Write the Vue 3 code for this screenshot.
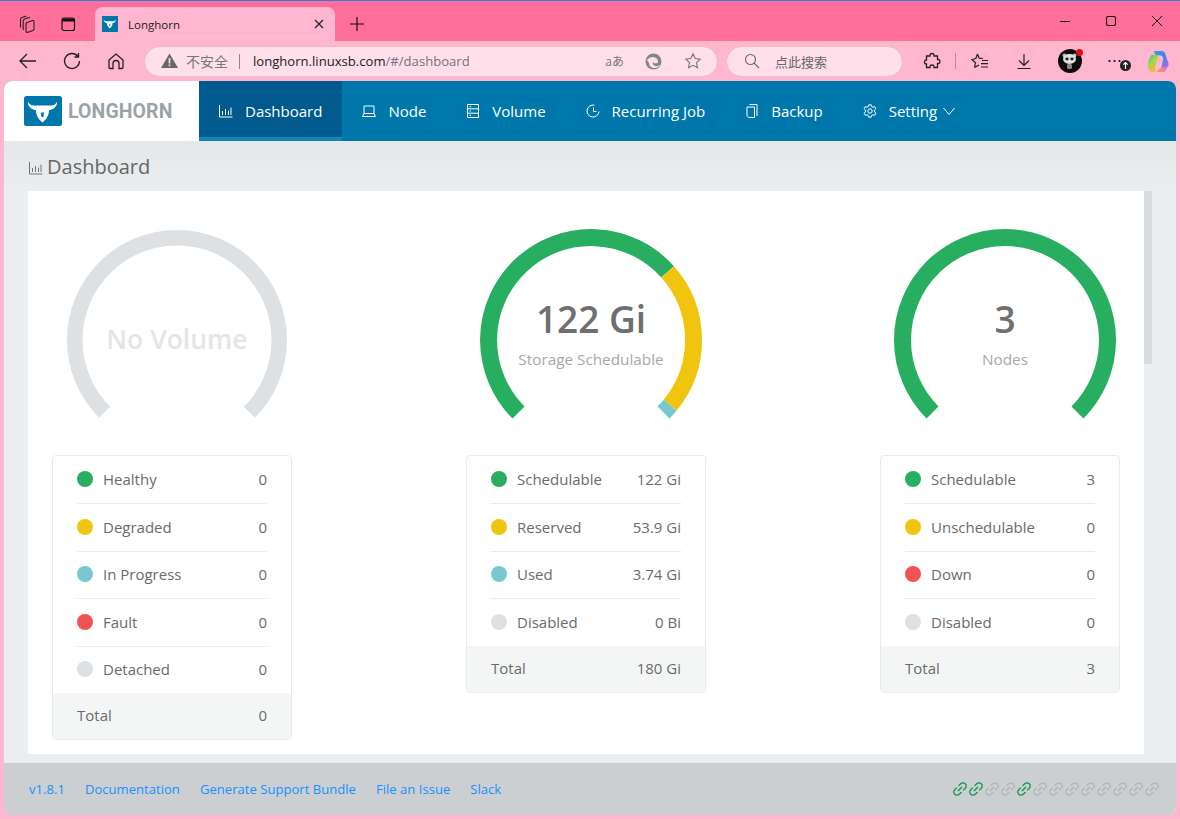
<script setup>
const cx = 115, cy = 115
function pt(a, r) {
  const t = (a - 90) * Math.PI / 180
  return `${(cx + r * Math.cos(t)).toFixed(2)} ${(cy + r * Math.sin(t)).toFixed(2)}`
}
function arc(a0, a1, r) {
  return `M${pt(a0, r)} A${r} ${r} 0 ${a1 - a0 > 180 ? 1 : 0} 1 ${pt(a1, r)}`
}
function segs(list, r) {
  const total = list.reduce((s, x) => s + x.v, 0)
  let a = -135
  return list.map(x => {
    const b = a + x.v / total * 270
    const s = { d: arc(a, b, r), c: x.c }
    a = b
    return s
  })
}
const G = '#27ae60', Y = '#f1c40f', B = '#78c9cf', R = '#f15354', D = '#dee1e3'
const cards = [
  {
    main: 'No Volume', sub: '', empty: true, w: 15.5,
    arcs: segs([{ v: 1, c: D }], 102.25),
    rows: [['Healthy', '0', G], ['Degraded', '0', Y], ['In Progress', '0', B], ['Fault', '0', R], ['Detached', '0', D]],
    total: '0'
  },
  {
    main: '122 Gi', sub: 'Storage Schedulable', w: 17,
    arcs: segs([{ v: 122, c: G }, { v: 53.9, c: Y }, { v: 3.74, c: B }], 102.5),
    rows: [['Schedulable', '122 Gi', G], ['Reserved', '53.9 Gi', Y], ['Used', '3.74 Gi', B], ['Disabled', '0 Bi', D]],
    total: '180 Gi'
  },
  {
    main: '3', sub: 'Nodes', w: 17,
    arcs: segs([{ v: 1, c: G }], 102.5),
    rows: [['Schedulable', '3', G], ['Unschedulable', '0', Y], ['Down', '0', R], ['Disabled', '0', D]],
    total: '3'
  }
]
const nav = [
  { t: 'Dashboard', i: 'chart', on: true },
  { t: 'Node', i: 'laptop' },
  { t: 'Volume', i: 'db' },
  { t: 'Recurring Job', i: 'clock' },
  { t: 'Backup', i: 'copy' },
  { t: 'Setting', i: 'gear', caret: true }
]
const links = ['Documentation', 'Generate Support Bundle', 'File an Issue', 'Slack']
const chain = [1, 1, 0, 0, 1, 0, 0, 0, 0, 0, 0, 0, 0]
const linkPath = 'M574 665.4a8.03 8.03 0 0 0-11.3 0L446.5 781.6c-53.8 53.8-144.6 59.5-204 0-59.5-59.5-53.8-150.2 0-204l116.2-116.2c3.1-3.1 3.1-8.2 0-11.3l-39.8-39.8a8.03 8.03 0 0 0-11.3 0L191.4 526.5c-84.6 84.6-84.6 221.5 0 306s221.5 84.6 306 0l116.2-116.2c3.1-3.1 3.1-8.2 0-11.3L574 665.4zm258.6-474c-84.6-84.6-221.5-84.6-306 0L410.3 307.6a8.03 8.03 0 0 0 0 11.3l39.7 39.7c3.1 3.1 8.2 3.1 11.3 0l116.2-116.2c53.8-53.8 144.6-59.5 204 0 59.5 59.5 53.8 150.2 0 204L665.3 562.6a8.03 8.03 0 0 0 0 11.3l39.8 39.8c3.1 3.1 8.2 3.1 11.3 0l116.2-116.2c84.5-84.6 84.5-221.5 0-306.1zM610.1 372.3a8.03 8.03 0 0 0-11.3 0L372.3 598.7a8.03 8.03 0 0 0 0 11.3l39.6 39.6c3.1 3.1 8.2 3.1 11.3 0l226.4-226.4c3.1-3.1 3.1-8.2 0-11.3l-39.5-39.6z'
const bull = 'M4 5.500C5 8 7 9.500 10 9.500H27C30 9.500 32 8 33 5.500C33.500 10 30.500 13 25 14.300C25 18 24 22 18.500 26.500C13 22 12 18 12 14.300C6.500 13 3.500 10 4 5.500ZM17 16.500H20L19.700 20Q18.500 22.500 17.300 20Z'
</script>

<template>
  <div class="screen">
    <div class="tabbar">
      <button class="chrome-btn first">
        <svg width="20" height="20" viewBox="0 0 20 20" fill="none" stroke="#222" stroke-width="1.100"><path d="M11 8.500L16.500 6.500Q18 6.200 18 8V15Q18 16 17 16.500L12 18.300Q10 18.700 10 17V10Q10 9 11 8.500Z"/><path d="M7.200 16V7Q7.200 5.500 8.700 5L14 3.200M4.500 13.500V5.500Q4.500 4 6 3.500L10.500 2"/></svg>
      </button>
      <button class="chrome-btn second">
        <svg width="20" height="20" viewBox="0 0 20 20" fill="none" stroke="#111" stroke-width="1.200"><rect x="4" y="4" width="12.500" height="12.500" rx="2"/><path d="M4 6H16.500" stroke-width="3"/></svg>
      </button>
      <div class="tab">
        <svg class="fav" width="16" height="16" viewBox="0 0 38 38" preserveAspectRatio="none"><rect width="38" height="38" fill="#0077aa"/><path :d="bull" fill="#fff" fill-rule="evenodd" transform="translate(0 3)"/></svg>
        <span class="tab-title">Longhorn</span>
        <svg class="tab-x" width="12" height="12" viewBox="0 0 12 12" stroke="#222" stroke-width="1.200"><path d="M2 2L10 10M10 2L2 10"/></svg>
      </div>
      <svg class="plus" width="16" height="16" viewBox="0 0 16 16" stroke="#111" stroke-width="1.200"><path d="M8 1V15M1 8H15"/></svg>
      <div class="winctl">
        <svg width="12" height="12" viewBox="0 0 12 12" stroke="#111" stroke-width="1"><path d="M1 6.500H11"/></svg>
        <svg width="12" height="12" viewBox="0 0 12 12" fill="none" stroke="#111" stroke-width="1.100"><rect x="1.500" y="1.500" width="9" height="9" rx="1.500"/></svg>
        <svg width="12" height="12" viewBox="0 0 12 12" stroke="#111" stroke-width="1"><path d="M1 1L11 11M11 1L1 11"/></svg>
      </div>
    </div>

    <div class="toolbar">
      <svg class="tb back" width="20" height="20" viewBox="0 0 20 20" fill="none" stroke="#222" stroke-width="1.300"><path d="M2 10H18M9 3L2 10L9 17"/></svg>
      <svg class="tb reload" width="20" height="20" viewBox="0 0 20 20" fill="none" stroke="#222" stroke-width="1.300"><path d="M16 5.500A7.500 7.500 0 1 0 17.500 10M16.500 2V6H12.500"/></svg>
      <svg class="tb home" width="20" height="20" viewBox="0 0 20 20" fill="none" stroke="#222" stroke-width="1.300"><path d="M3 9L10 3L17 9V16.500A1 1 0 0 1 16 17.500H13V12.500A3 3 0 0 0 7 12.500V17.500H4A1 1 0 0 1 3 16.500Z"/></svg>
      <div class="addr">
        <svg width="17" height="16" viewBox="0 0 16 16" preserveAspectRatio="none"><path d="M8 .5L16 15H0Z" fill="#666"/><path d="M7.200 5H8.800V10.500H7.200ZM7.200 11.500H8.800V13.200H7.200Z" fill="#fde"/></svg>
        <span class="unsafe">不安全</span>
        <i class="sep"></i>
        <span class="url"><b>longhorn.linuxsb.com</b>/#/dashboard</span>
        <span class="aa">aあ</span>
        <svg class="edge" width="17" height="17" viewBox="0 0 17 17"><circle cx="8.500" cy="8.500" r="8" fill="#858585"/><path d="M2 7C5 3 12 3 13 8C13.500 11 9 11 8 9C7 13 12 15 16 11C13 17 4 16 4 10Z" fill="#ffdfe9"/></svg>
        <svg class="star" width="18" height="18" viewBox="0 0 18 18" fill="none" stroke="#777" stroke-width="1.100"><path d="M9 1.800L11.200 6.500L16.300 7.200L12.500 10.700L13.500 15.800L9 13.300L4.500 15.800L5.500 10.700L1.700 7.200L6.800 6.500Z"/></svg>
      </div>
      <div class="search">
        <svg width="16" height="16" viewBox="0 0 16 16" fill="none" stroke="#666" stroke-width="1.100"><circle cx="6.500" cy="6.500" r="5"/><path d="M10 10L15 15"/></svg>
        <span>点此搜索</span>
      </div>
      <svg class="tb ext" width="18" height="18" viewBox="0 0 18 18" fill="none" stroke="#222" stroke-width="1.300"><path d="M7 3C7 1 11 1 11 3V4H14.500V7.500H15.500C17.500 7.500 17.500 11.500 15.500 11.500H14.500V15.500H11V14.500C11 12.500 7 12.500 7 14.500V15.500H3.500V12H3C1 12 1 8 3 8H3.500V4H7Z"/></svg>
      <i class="tb-sep"></i>
      <svg class="tb fav-list" width="18" height="18" viewBox="0 0 18 18" fill="none" stroke="#222" stroke-width="1.200"><path d="M6.500 2L8.200 6.200L12 6.500M3.500 15.500L4.500 10.800L1 7.500L4.800 6.500L6.500 2M3.500 15.500L8 13M11 8.500H17M10 11.700H17M10 15H17"/></svg>
      <svg class="tb dl" width="18" height="18" viewBox="0 0 18 18" fill="none" stroke="#222" stroke-width="1.200"><path d="M9 2V13M4 8.500L9 13.500L14 8.500M2.500 16.500H15.500"/></svg>
      <div class="avatar">
        <svg width="24" height="24" viewBox="0 0 24 24"><circle cx="12" cy="12" r="12" fill="#0b0b0b"/><circle cx="6.500" cy="6.500" r="2" fill="#bbb"/><circle cx="16.500" cy="6.500" r="2" fill="#bbb"/><ellipse cx="11.500" cy="10" rx="6.500" ry="5" fill="#e2e2e2"/><ellipse cx="9" cy="10" rx="1.700" ry="1.400" fill="#222"/><ellipse cx="14" cy="10" rx="1.700" ry="1.400" fill="#222"/><rect x="9" y="15" width="5" height="5" rx="1.500" fill="#8a8a8a"/></svg>
        <i class="reddot"></i>
      </div>
      <div class="more">
        <svg width="20" height="24" viewBox="0 0 20 24" fill="#111"><circle cx="1.500" cy="12" r="1.100"/><circle cx="6.500" cy="12" r="1.100"/><circle cx="11.500" cy="12" r="1.100"/></svg>
        <svg class="upd" width="11" height="11" viewBox="0 0 11 11"><circle cx="5.500" cy="5.500" r="5.500" fill="#222"/><path d="M5.500 9V2.500M3.300 4.700L5.500 2.500L7.700 4.700" fill="none" stroke="#fff" stroke-width="1.200"/></svg>
      </div>
      <svg class="copilot" width="23" height="23" viewBox="0 0 24 24">
        <defs>
          <linearGradient id="cpa" x1="0" y1="0" x2="1" y2="1"><stop offset="0" stop-color="#1fa6ea"/><stop offset=".5" stop-color="#4a7ef0"/><stop offset="1" stop-color="#b06cf0"/></linearGradient>
          <linearGradient id="cpb" x1="0" y1="0" x2=".6" y2="1"><stop offset="0" stop-color="#32c7a0"/><stop offset=".5" stop-color="#a6d940"/><stop offset="1" stop-color="#f8b43a"/></linearGradient>
          <linearGradient id="cpc" x1="0" y1="0" x2="1" y2="0"><stop offset="0" stop-color="#f6a34a"/><stop offset="1" stop-color="#ee6fb8"/></linearGradient>
        </defs>
        <path d="M7 1H15C17 1 18.500 2 19 4L22.500 14C23 16.500 21 18.500 19 18.500H15L17 9C16.500 6.500 15 5.500 13 5.500H9C8 3 7.500 1.500 7 1Z" fill="url(#cpa)"/>
        <path d="M5 5H12L9 15C8.300 19 9 21.500 8 23H5C2.500 22.500 1 20 1 17C1 13 2.500 7 5 5Z" fill="url(#cpb)"/>
        <path d="M8 23H17C19.500 22 21 19.500 22.500 15C21.500 18 19 18.800 17 18.800H13.500L12 20.500C11 22 9.500 23 8 23Z" fill="url(#cpc)"/>
      </svg>
    </div>

    <div class="app">
      <header class="head">
        <div class="brand">
          <svg width="38" height="30" viewBox="0 0 38 30"><rect width="38" height="30" rx="2.500" fill="#0077aa"/><path :d="bull" fill="#fff" fill-rule="evenodd"/></svg>
          <span>LONGHORN</span>
        </div>
        <nav class="nav">
          <a v-for="n in nav" :key="n.t" class="nav-item" :class="{ on: n.on }">
            <svg width="14" height="14" viewBox="0 0 14 14" fill="none" stroke="#fff" stroke-width="1">
              <path v-if="n.i === 'chart'" d="M.5 1V13H13.500M3.500 11V7M6.500 11V5M9.500 11V6.500M12 11V3.500"/>
              <path v-else-if="n.i === 'laptop'" d="M2 2H12V9.500H2ZM.5 12.500L2 9.500H12L13.500 12.500Z"/>
              <path v-else-if="n.i === 'db'" d="M1.500 .5H12.500V13.500H1.500ZM1.500 4.800H12.500M1.500 9.200H12.500M3.500 2.700H5M3.500 7H5M3.500 11.400H5"/>
              <path v-else-if="n.i === 'clock'" d="M8.500 1.200A6 6 0 1 0 13 7.500M7.500 3.500V7.500H10.500"/>
              <path v-else-if="n.i === 'copy'" d="M4.500 .5H12V12M2 3H9.500V13.500H3.500L2 11.500Z"/>
              <g v-else>
                <circle cx="7" cy="7" r="2.200"/>
                <path d="M5.800.8H8.200L8.600 2.500L10 3.200L11.700 2.600L12.900 4.700L11.600 5.900V7.900L12.900 9.200L11.700 11.300L10 10.800L8.600 11.500L8.200 13.200H5.800L5.400 11.500L4 10.800L2.300 11.300L1.100 9.200L2.400 7.900V5.900L1.100 4.700L2.300 2.600L4 3.200L5.400 2.500Z"/>
              </g>
            </svg>
            <span>{{ n.t }}</span>
            <svg v-if="n.caret" class="caret" width="12" height="12" viewBox="0 0 12 12" fill="none" stroke="#fff" stroke-width="1"><path d="M.5 3L6 9.500L11.500 3"/></svg>
          </a>
        </nav>
      </header>

      <main class="main">
        <h1 class="title">
          <svg width="14" height="14" viewBox="0 0 14 14" fill="none" stroke="#6f7477" stroke-width="1"><path d="M.5 1V13H13.500M3.500 11V7M6.500 11V5M9.500 11V6.500M12 11V3.500"/></svg>
          <span>Dashboard</span>
        </h1>
        <div class="body-row">
          <section class="panel">
            <div class="grid">
              <div v-for="c in cards" :key="c.main" class="col">
                <div class="gauge">
                  <svg width="230" height="230" viewBox="0 0 230 230" fill="none" :stroke-width="c.w">
                    <path v-for="(a, i) in c.arcs" :key="i" :d="a.d" :stroke="a.c"/>
                  </svg>
                  <div class="gauge-text" :class="{ empty: c.empty }">
                    <div class="g-main">{{ c.main }}</div>
                    <div v-if="c.sub" class="g-sub">{{ c.sub }}</div>
                  </div>
                </div>
                <div class="legend">
                  <div v-for="row in c.rows" :key="row[0]" class="row">
                    <i class="dot" :style="{ background: row[2] }"></i>
                    <span class="name">{{ row[0] }}</span>
                    <span class="val">{{ row[1] }}</span>
                  </div>
                  <div class="total">
                    <span class="name">Total</span>
                    <span class="val">{{ c.total }}</span>
                  </div>
                </div>
              </div>
            </div>
          </section>
          <div class="scroll"><i></i></div>
        </div>
      </main>

      <footer class="foot">
        <a class="ver">v1.8.1</a>
        <a v-for="l in links" :key="l">{{ l }}</a>
        <div class="chains">
          <svg v-for="(g, i) in chain" :key="i" width="16" height="16" viewBox="64 64 896 896" :fill="g ? '#0a9648' : '#b2b5b7'"><path :d="linkPath"/></svg>
        </div>
      </footer>
    </div>
  </div>
</template>

<style scoped>
.screen {
  width: 1180px;
  height: 819px;
  display: flex;
  flex-direction: column;
  overflow: hidden;
  background: #ffb6ce;
  font-family: "Open Sans", "Noto Sans CJK SC", sans-serif;
  color: #6b6b6b;
}
.tabbar {
  height: 41px;
  box-sizing: border-box;
  border-top: 1px solid #2d7fe0;
  background: #ff6f9c;
  display: flex;
  align-items: center;
  flex: none;
}
.chrome-btn {
  border: 0;
  background: none;
  padding: 0;
  width: 20px;
  height: 20px;
  margin-top: 6px;
}
.first { margin-left: 16px; }
.second { margin-left: 22px; }
.tab {
  margin-left: 17px;
  align-self: flex-end;
  width: 240px;
  height: 34px;
  box-sizing: border-box;
  background: #ffb6ce;
  border-radius: 8px 8px 0 0;
  display: flex;
  align-items: center;
  padding: 0 10px 0 7px;
}
.tab-title {
  margin-left: 10px;
  font-size: 11.500px;
  color: #222;
  flex: 1;
}
.plus { margin: 6px 0 0 14px; }
.winctl {
  margin-left: auto;
  margin-top: -1px;
  display: flex;
  gap: 34px;
  padding-right: 17px;
}
.toolbar {
  height: 40px;
  flex: none;
  display: flex;
  align-items: center;
  background: #ffb6ce;
}
.tb { flex: none; }
.back { margin-left: 18px; }
.reload { margin-left: 24px; }
.home { margin-left: 24px; }
.addr {
  margin-left: 18px;
  width: 574px;
  height: 31px;
  box-sizing: border-box;
  border-radius: 16px;
  background: #ffe0ea;
  border: 1px solid #e9bccb;
  display: flex;
  align-items: center;
  padding: 0 15px 0 16px;
  flex: none;
}
.unsafe { margin-left: 8px; font-size: 14px; color: #777; }
.sep { width: 1px; height: 15px; background: #888; margin: 0 13px 0 11px; }
.url { font-size: 13.100px; color: #7a7178; flex: 1; white-space: nowrap; }
.url b { font-weight: 400; color: #222; }
.aa { font-size: 12px; color: #777; margin-right: 21px; }
.edge { margin-right: 22px; }
.search {
  margin-left: 8px;
  width: 177px;
  height: 31px;
  box-sizing: border-box;
  border-radius: 16px;
  background: #ffe0ea;
  border: 1px solid #e9bccb;
  display: flex;
  align-items: center;
  padding-left: 17px;
  gap: 15px;
  font-size: 13px;
  color: #666;
  flex: none;
}
.ext { margin-left: 20px; }
.tb-sep { width: 1px; height: 16px; background: #b58ea0; margin: 0 15px 0 14px; flex: none; }
.dl { margin-left: 26px; }
.avatar { position: relative; margin-left: 25px; width: 24px; height: 24px; flex: none; }
.avatar svg { display: block; }
.reddot {
  position: absolute;
  right: -1px;
  top: 0;
  width: 7px;
  height: 7px;
  border-radius: 50%;
  background: #e01010;
}
.more { position: relative; margin-left: 26px; width: 20px; height: 24px; flex: none; }
.more > svg:first-child { display: block; }
.upd { position: absolute; left: 12px; top: 11px; }
.copilot { margin-left: 19px; flex: none; }
.app {
  flex: 1;
  min-height: 0;
  margin: 0 4px 4px;
  border-radius: 8px;
  overflow: hidden;
  display: flex;
  flex-direction: column;
  background: #ebeef0;
}
.head { height: 60px; flex: none; display: flex; background: #0077aa; }
.brand {
  width: 195px;
  background: #fff;
  display: flex;
  align-items: center;
  padding-left: 20px;
  box-sizing: border-box;
  gap: 6px;
  flex: none;
}
.brand span {
  font-family: "Roboto", sans-serif;
  font-weight: 700;
  font-size: 19.400px;
  letter-spacing: .15px;
  color: #9aa3a8;
}
.nav { display: flex; }
.nav-item {
  display: flex;
  align-items: center;
  gap: 12px;
  padding: 4px 20px 0;
  color: #fff;
  font-size: 15px;
  box-sizing: border-box;
  border-bottom: 4px solid transparent;
}
.nav-item.on { background: #005a8e; border-bottom-color: #0f88b9; }
.caret { margin-left: -6px; }
.main {
  flex: 1;
  min-height: 0;
  display: flex;
  flex-direction: column;
  background: linear-gradient(#e5e8e9, #ebeef0 50px);
  padding: 0 24px 9px;
}
.title {
  height: 50px;
  box-sizing: border-box;
  margin: 0;
  flex: none;
  display: flex;
  align-items: center;
  gap: 4px;
  font-size: 20px;
  font-weight: 400;
  color: #666;
  padding: 0 0 0 1px;
}
.title svg { margin-top: 4px; }
.body-row { flex: 1; min-height: 0; display: flex; }
.panel { flex: 1; background: #fff; overflow: hidden; min-width: 0; }
.scroll { width: 8px; flex: none; }
.scroll i { display: block; height: 173px; background: #d9dcde; }
.grid {
  padding: 34px 24px 0;
  display: flex;
  justify-content: space-between;
  align-items: flex-start;
}
.col { width: 240px; }
.gauge { position: relative; width: 230px; height: 230px; margin-left: 10px; }
.gauge svg { display: block; }
.gauge-text {
  position: absolute;
  left: 0;
  right: 0;
  top: 70px;
  text-align: center;
}
.g-main { font-size: 37px; line-height: 50px; color: #6f6f6f; font-weight: 600; margin-top: -1px; }
.g-sub { font-size: 15.300px; line-height: 20px; margin-top: 5px; color: #a8a8a8; }
.gauge-text.empty { top: 95px; }
.empty .g-main { font-size: 26.500px; line-height: 40px; color: #e3e6e8; font-weight: 600; }
.legend {
  border: 1px solid #e9ecee;
  border-radius: 4px;
  overflow: hidden;
  background: #fff;
}
.row {
  margin: 0 24px;
  height: 47.400px;
  box-sizing: border-box;
  padding-bottom: 1.500px;
  display: flex;
  align-items: center;
  font-size: 15px;
}
.row + .row { border-top: 1px solid #e8ebec; }
.dot { width: 16px; height: 16px; border-radius: 50%; margin-right: 10px; flex: none; }
.name { flex: 1; }
.total {
  height: 46px;
  box-sizing: border-box;
  background: #f4f6f6;
  padding: 0 24px 2px;
  display: flex;
  align-items: center;
  font-size: 15px;
}
.foot {
  height: 52px;
  flex: none;
  background: #cbcfd2;
  display: flex;
  align-items: center;
  padding: 0 16px 0 25px;
  gap: 20px;
  font-size: 13.100px;
  color: #1890ff;
}
.chains { margin-left: auto; display: flex; }
.chains svg { display: block; }
</style>

<style>
html, body { margin: 0; background: #ffb6ce; }
</style>
